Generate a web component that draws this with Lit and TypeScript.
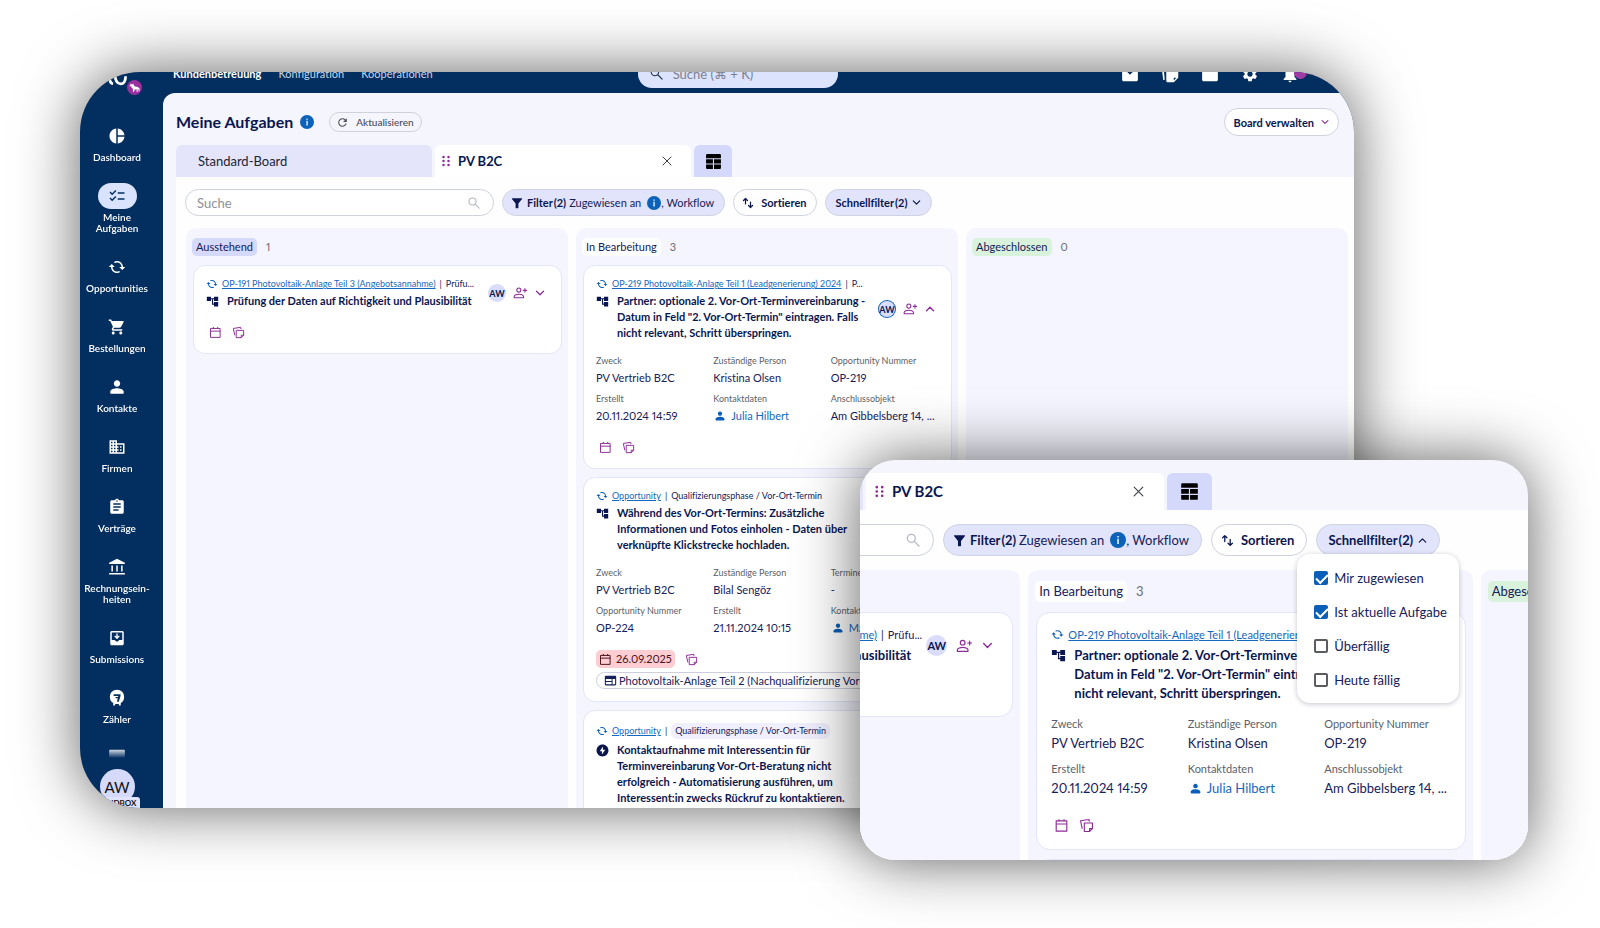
import { LitElement, html, css, svg, nothing } from "lit";
import { customElement, property } from "lit/decorators.js";
import { classMap } from "lit/directives/class-map.js";

/* ---------- icons ---------- */

const solid = (d: string) => svg`<path fill="currentColor" fill-rule="evenodd" d=${d} />`;
const line = (d: string, w = 1.8) =>
  svg`<path fill="none" stroke="currentColor" stroke-width=${w} stroke-linecap="round" stroke-linejoin="round" d=${d} />`;

const ICONS: Record<string, unknown> = {
  dashboard: solid("M11 2v20c-5.07-.5-9-4.79-9-10s3.93-9.5 9-10zm2.03 0v8.99H22c-.47-4.74-4.24-8.52-8.97-8.99zm0 11.01V22c4.74-.47 8.5-4.25 8.97-8.99h-8.97z"),
  tasks: solid("M22 7h-9v2h9V7zm0 8h-9v2h9v-2zM5.54 11 2 7.46l1.41-1.41 2.12 2.12 4.24-4.24 1.41 1.41L5.54 11zm0 8L2 15.46l1.41-1.41 2.12 2.12 4.24-4.24 1.41 1.41L5.54 19z"),
  cycle: svg`<g transform="matrix(-1 0 0 1 24 0)">${solid("m19 8-4 4h3c0 3.31-2.69 6-6 6-1.01 0-1.97-.25-2.8-.7l-1.46 1.46C8.97 19.54 10.43 20 12 20c4.42 0 8-3.58 8-8h3l-4-4zM6 12c0-3.31 2.69-6 6-6 1.01 0 1.97.25 2.8.7l1.46-1.46C15.03 4.46 13.57 4 12 4c-4.42 0-8 3.58-8 8H1l4 4 4-4H6z")}</g>`,
  cart: solid("M7 18c-1.1 0-1.99.9-1.99 2S5.9 22 7 22s2-.9 2-2-.9-2-2-2zM1 2v2h2l3.6 7.59-1.35 2.45c-.16.28-.25.61-.25.96 0 1.1.9 2 2 2h12v-2H7.42c-.14 0-.25-.11-.25-.25l.03-.12.9-1.63h7.45c.75 0 1.41-.41 1.75-1.03l3.58-6.49c.08-.14.12-.31.12-.48 0-.55-.45-1-1-1H5.21l-.94-2H1zm16 16c-1.1 0-1.99.9-1.99 2s.89 2 1.99 2 2-.9 2-2-.9-2-2-2z"),
  person: solid("M12 11.5c2.35 0 4.25-1.9 4.25-4.25S14.35 3 12 3 7.75 4.9 7.75 7.25 9.65 11.5 12 11.5zM12 13.5c-3.2 0-9 1.4-9 4.8v1.2c0 .8.6 1.5 1.5 1.5h15c.9 0 1.5-.7 1.5-1.5v-1.2c0-3.4-5.8-4.8-9-4.8z"),
  company: solid("M12 7V3H2v18h20V7H12zM6 19H4v-2h2v2zm0-4H4v-2h2v2zm0-4H4V9h2v2zm0-4H4V5h2v2zm4 12H8v-2h2v2zm0-4H8v-2h2v2zm0-4H8V9h2v2zm0-4H8V5h2v2zm10 12h-8v-2h2v-2h-2v-2h2v-2h-2V9h8v10zm-2-8h-2v2h2v-2zm0 4h-2v2h2v-2z"),
  contract: solid("M19 3h-4.18C14.4 1.84 13.3 1 12 1c-1.3 0-2.4.84-2.82 2H5c-1.1 0-2 .9-2 2v14c0 1.1.9 2 2 2h14c1.1 0 2-.9 2-2V5c0-1.1-.9-2-2-2zm-7 0c.55 0 1 .45 1 1s-.45 1-1 1-1-.45-1-1 .45-1 1-1zm2 14H7v-2h7v2zm3-4H7v-2h10v2zm0-4H7V7h10v2z"),
  bank: solid("M12 1 1.5 6.2V8h21V6.2L12 1zM4.5 10h2v8h-2zM11 10h2v8h-2zM17.5 10h2v8h-2zM1.5 20h21v2h-21z"),
  inbox: solid("M5 2.500h14c1.100 0 2 .9 2 2v15c0 1.100-.9 2-2 2H5c-1.100 0-2-.9-2-2v-15c0-1.100.9-2 2-2zm0 2v10h4c.6 1.200 1.700 2 3 2s2.400-.8 3-2h4v-10H5zm6.100 1.500h1.800v4l1.600-1.500 1.200 1.200L12 13.500l-3.700-3.800 1.200-1.200 1.600 1.500z"),
  meter: solid("M12 1c5.500 0 9.500 4.200 9.500 9.500 0 3.700-1.700 6.500-4.500 8.200V22h-2.500v-2h-5v2H7v-3.300c-2.800-1.700-4.500-4.500-4.500-8.200C2.500 5.200 6.500 1 12 1zM7.500 7v2.200h6.200l-.3 1.300h-3.200v1.800h2.800L12 17h2.400l2.300-7.800V7z"),
  box: solid("M3.500 3h17c1.100 0 2 .9 2 2v14.500c0 1.100-.9 2-2 2h-17c-1.100 0-2-.9-2-2V5c0-1.100.9-2 2-2z"),
  chat: solid("M3 1h18c.8 0 1.500.7 1.500 1.500V16H1.500V2.500C1.500 1.700 2.200 1 3 1z"),
  tree: solid("M22.500 11.200V3h-7.700v3H9.200V3H1.500v8.200h7.700V8h1.900v9.900h3.700V21h7.700v-8.200h-7.700v3.100h-1.700V8h1.700v3.200z"),
  funnel: solid("M2.500 2.500h19c.7 0 1 .8.600 1.300L14.800 13v8.700c0 .5-.4.800-.8.800h-4c-.4 0-.8-.3-.8-.8V13L1.900 3.800c-.4-.5-.1-1.300.6-1.300z"),
  refresh: solid("M17.650 6.350C16.200 4.900 14.210 4 12 4c-4.420 0-7.990 3.580-7.990 8s3.570 8 7.990 8c3.730 0 6.840-2.550 7.730-6h-2.080c-.82 2.330-3.040 4-5.650 4-3.310 0-6-2.690-6-6s2.690-6 6-6c1.660 0 3.140.69 4.220 1.780L13 11h7V4l-2.350 2.350z"),
  search: line("M15.500 9.500a6 6 0 1 1-12 0 6 6 0 0 1 12 0zM14 14l7 7"),
  close: line("M4 4l16 16M20 4 4 20", 2),
  down: line("M5 8.500l7 7 7-7", 2.600),
  up: line("M5 15.500l7-7 7 7", 2.600),
  sort: line("M7 14V3M3 7l4-4 4 4M17 10v11M13 17l4 4 4-4", 2.400),
  grid: solid("M3 1.500h18A1.500 1.500 0 0 1 22.500 3v4.300H1.500V3A1.500 1.500 0 0 1 3 1.500zM1.500 8.800h9.700v5.900H1.500zM12.700 8.800h9.800v5.900h-9.800zM1.500 16.300h9.700v6.200H3A1.500 1.500 0 0 1 1.500 21zM12.700 16.300h9.800V21a1.500 1.500 0 0 1-1.500 1.500h-8.300z"),
  drag: solid("M7 1.500a2.500 2.500 0 1 1 0 5 2.500 2.500 0 0 1 0-5zM17 1.500a2.500 2.500 0 1 1 0 5 2.500 2.500 0 0 1 0-5zM7 9.500a2.500 2.500 0 1 1 0 5 2.500 2.500 0 0 1 0-5zM17 9.500a2.500 2.500 0 1 1 0 5 2.500 2.500 0 0 1 0-5zM7 17.500a2.500 2.500 0 1 1 0 5 2.500 2.500 0 0 1 0-5zM17 17.500a2.500 2.500 0 1 1 0 5 2.500 2.500 0 0 1 0-5z"),
  info: svg`<circle cx="12" cy="12" r="12" fill="#0b62b8" /><path fill="#fff" d="M11 10h2.200v8H11zM11 6h2.200v2.300H11z" />`,
  assign: line("M13.500 7a3.500 3.500 0 1 1-7 0 3.500 3.500 0 0 1 7 0zM2 20v-2c0-2.500 5-4 8-4s8 1.500 8 4v2zM20.500 4.500v6M17.500 7.500h6"),
  calendar: line("M3.500 4.500h17V21h-17zM3.500 9.500h17M8 4.500V2.500M16 4.500V2.500"),
  notes: line("M8.500 8h13v9l-4.500 4.500H8.500zM21.500 17H17v4.500M5 16.500 2.500 4.500 16 2.500l.5 2.500"),
  bolt: solid("M12 1c6.100 0 11 4.900 11 11s-4.900 11-11 11S1 18.100 1 12 5.900 1 12 1zM12.800 4.500 7 13.300h4v6.200l6-8.800h-4.200z"),
  web: solid("M3.500 3h17c1.100 0 2 .9 2 2v14c0 1.100-.9 2-2 2h-17c-1.100 0-2-.9-2-2V5c0-1.100.9-2 2-2zm0 6v3.800H14V9H3.500zm0 5.600V19H14v-4.400H3.500zM15.800 9v10h4.700V9h-4.700z"),
  mail: solid("M3.500 3h17c1.100 0 2 .9 2 2v14.500c0 1.100-.9 2-2 2h-17c-1.100 0-2-.9-2-2V5c0-1.100.9-2 2-2zM8 9l4 4 4-4z"),
  notesSolid: solid("M7 5h14c1.100 0 2 .9 2 2v10l-6 6H9c-1.100 0-2-.9-2-2V7c0-1.100.9-2 2-2zm10 12v3.500l3.500-3.500zM1 5l2 15 2-.5L3.500 3z"),
  gear: solid("M19.140 12.940c.04-.3.060-.61.060-.94 0-.32-.02-.64-.07-.94l2.030-1.580c.18-.14.230-.41.120-.61l-1.920-3.320c-.12-.22-.37-.29-.59-.22l-2.390.96c-.5-.38-1.030-.7-1.620-.94l-.36-2.540c-.04-.24-.24-.41-.48-.41h-3.840c-.24 0-.43.17-.47.41l-.36 2.540c-.59.24-1.130.57-1.620.94l-2.390-.96c-.22-.08-.47 0-.59.22L2.740 8.870c-.12.21-.08.470.12.610l2.030 1.580c-.05.3-.09.630-.09.940s.02.640.07.940l-2.030 1.580c-.18.140-.23.410-.12.610l1.920 3.320c.12.220.37.290.59.220l2.390-.96c.5.380 1.030.7 1.620.940l.36 2.540c.05.240.24.410.48.410h3.840c.24 0 .44-.17.470-.41l.36-2.540c.59-.24 1.130-.56 1.620-.94l2.390.96c.22.080.47 0 .59-.22l1.920-3.320c.12-.22.070-.47-.12-.61l-2.010-1.580zM12 15.600c-1.980 0-3.600-1.620-3.600-3.600s1.620-3.600 3.600-3.600 3.600 1.620 3.600 3.600-1.620 3.600-3.600 3.600z"),
  bell: solid("M12 23c1.100 0 2-.9 2-2h-4c0 1.100.89 2 2 2zm6-7v-5c0-3.070-1.640-5.640-4.500-6.320V4c0-.83-.67-1.500-1.500-1.500s-1.500.67-1.500 1.500v.68C7.630 5.360 6 7.920 6 11v5l-2.500 2.500V20h17v-1.500L18 16z"),
  logo: svg`<path fill="none" stroke="#fff" stroke-width="4" d="M5 8c0 5 1 8 5 9M13 3c0 9 3 14 8 14 4 0 7-4 7-11" />`,
  unicorn: svg`<circle cx="12" cy="12" r="12" fill="#9a2fa0" /><path fill="#fff" d="M5 5l3 2 2-1 2 4 5 1 3 2v5h-1.500v-3l-1.500-.5V19h-1.500v-4h-3L11 19H9.500v-5L7 12V9.500l-2.500 1L4 9l2-2z" />`,
};

const icon = (name: string, cls = "") =>
  html`<svg class="icon ${cls}" viewBox=${name === "logo" ? "0 0 30 20" : "0 0 24 24"} aria-hidden="true">${ICONS[name]}</svg>`;

const shared = css`
  * { box-sizing: border-box; }
  .icon { display: block; flex: none; width: 16px; height: 16px; }
  button { font: inherit; color: inherit; background: none; border: 0; padding: 0; margin: 0; cursor: pointer; }
  a { color: inherit; }
  ul, dl, dd, h1, h2, h3, p { margin: 0; padding: 0; }
  ul { list-style: none; }
`;

/* ---------- board data ---------- */

interface Field { label: string; value: string; contact?: boolean; }
interface Task {
  link: string; phase: string; phaseChip?: boolean; icon: string; title: string[];
  open?: boolean; watched?: boolean; due?: string; tag?: string; fields?: Field[];
}
interface Column { name: string; tone: string; tasks: Task[]; count: number; }

const COLUMNS: Column[] = [
  {
    name: "Ausstehend", tone: "blue", count: 1,
    tasks: [{
      link: "OP-191 Photovoltaik-Anlage Teil 3 (Angebotsannahme)", phase: "Prüfu...", icon: "tree",
      title: ["Prüfung der Daten auf Richtigkeit und Plausibilität"],
    }],
  },
  {
    name: "In Bearbeitung", tone: "white", count: 3,
    tasks: [
      {
        link: "OP-219 Photovoltaik-Anlage Teil 1 (Leadgenerierung) 2024", phase: "P...", icon: "tree", open: true, watched: true,
        title: ["Partner: optionale 2. Vor-Ort-Terminvereinbarung -", "Datum in Feld \"2. Vor-Ort-Termin\" eintragen. Falls", "nicht relevant, Schritt überspringen."],
        fields: [
          { label: "Zweck", value: "PV Vertrieb B2C" },
          { label: "Zuständige Person", value: "Kristina Olsen" },
          { label: "Opportunity Nummer", value: "OP-219" },
          { label: "Erstellt", value: "20.11.2024 14:59" },
          { label: "Kontaktdaten", value: "Julia Hilbert", contact: true },
          { label: "Anschlussobjekt", value: "Am Gibbelsberg 14, ..." },
        ],
      },
      {
        link: "Opportunity", phase: "Qualifizierungsphase / Vor-Ort-Termin", icon: "tree", open: true,
        title: ["Während des Vor-Ort-Termins: Zusätzliche", "Informationen und Fotos einholen - Daten über", "verknüpfte Klickstrecke hochladen."],
        fields: [
          { label: "Zweck", value: "PV Vertrieb B2C" },
          { label: "Zuständige Person", value: "Bilal Sengöz" },
          { label: "Termine", value: "-" },
          { label: "Opportunity Nummer", value: "OP-224" },
          { label: "Erstellt", value: "21.11.2024 10:15" },
          { label: "Kontaktdaten", value: "Maria", contact: true },
        ],
        due: "26.09.2025", tag: "Photovoltaik-Anlage Teil 2 (Nachqualifizierung Vor-Ort)",
      },
      {
        link: "Opportunity", phase: "Qualifizierungsphase / Vor-Ort-Termin", phaseChip: true, icon: "bolt", open: true,
        title: ["Kontaktaufnahme mit Interessent:in für", "Terminvereinbarung Vor-Ort-Beratung nicht", "erfolgreich - Automatisierung ausführen, um", "Interessent:in zwecks Rückruf zu kontaktieren."],
      },
    ],
  },
  { name: "Abgeschlossen", tone: "green", count: 0, tasks: [] },
];

const QUICK_FILTERS = [
  { id: "mine", label: "Mir zugewiesen", checked: true },
  { id: "current", label: "Ist aktuelle Aufgabe", checked: true },
  { id: "overdue", label: "Überfällig", checked: false },
  { id: "today", label: "Heute fällig", checked: false },
];

/* ---------- board ---------- */

@customElement("task-board")
export class TaskBoard extends LitElement {
  @property({ type: Boolean, reflect: true }) large = false;
  @property({ type: Boolean }) menuOpen = false;

  static styles = [shared, css`
    :host {
      --fs-tab: 13px; --fs-search: 13px; --fs-body: 11px; --fs-small: 9px; --fs-chip: 11px;
      --tab-w: 256px; --tab-h: 32px; --tab-l: 5px; --tab-r: 18px; --add-w: 38px;
      --ctl-h: 27px; --search-w: 309px; --ctl-l: 8px; --ctl-r: 10px; --gap: 8px;
      --bar-top: 12px; --bar-bottom: 12px; --edge-l: 10px; --edge-r: 6px;
      --col-top: 10px; --col-l: 7px; --col-r: 6px; --chip-h: 18px; --col-gap: 9px; --card-gap: 8px;
      --card-r: 12px; --pad-t: 11px; --pad-l: 12px; --pad-r: 3px; --pad-b: 12px; --act-r: 12px; --act-gap: 7px;
      --crumb-h: 14px; --crumb-gap: 2px; --line: 16px; --sec: 13px; --row-gap: 6px; --foot: 14px; --foot-h: 18px;
      --i-xs: 11px; --i-s: 12px; --i-m: 13px; --i-l: 14px; --i-grid: 17px; --avatar: 18px;
      display: flex; flex-direction: column; min-height: 0; color: #16205a;
      font-size: var(--fs-body); line-height: var(--line);
    }
    :host([large]) {
      --fs-tab: 15px; --fs-search: 15px; --fs-body: 13px; --fs-small: 11px; --fs-chip: 13px;
      --tab-w: 298px; --tab-h: 37px; --tab-l: 7px; --tab-r: 19px; --add-w: 45px;
      --ctl-h: 32px; --search-w: 359px; --ctl-l: 9px; --ctl-r: 12px; --gap: 9px;
      --bar-top: 14px; --bar-bottom: 14px; --edge-l: 11px; --edge-r: 7px;
      --col-top: 11px; --col-l: 8px; --col-r: 7px; --chip-h: 21px; --col-gap: 10px; --card-gap: 9px;
      --card-r: 14px; --pad-t: 13px; --pad-l: 14px; --pad-r: 4px; --pad-b: 13px; --act-r: 14px; --act-gap: 9px;
      --crumb-h: 16px; --crumb-gap: 4px; --line: 19px; --sec: 13px; --row-gap: 8px; --foot: 17px; --foot-h: 21px;
      --i-xs: 13px; --i-s: 13px; --i-m: 15px; --i-l: 16px; --i-grid: 19px; --avatar: 21px;
    }
    .tabs { display: flex; flex: none; height: var(--tab-h); gap: 3px; font-size: var(--fs-tab); }
    .tab { display: flex; align-items: center; width: var(--tab-w); border-radius: 6px 6px 0 0; background: #e4e5fb; color: #1d2433; padding: 0 22px; }
    .tab.active { background: #fff; color: #0a1650; font-weight: 700; padding: 0 var(--tab-r) 0 var(--tab-l); gap: 6px; }
    .tab.active button:first-child { color: #8c2d96; }
    .tab .name { flex: 1; text-align: left; }
    .tab .close { color: #3a3d45; }
    .tab .icon { width: var(--i-s); height: var(--i-s); }
    .add { display: grid; place-items: center; width: var(--add-w); border-radius: 6px 6px 0 0; background: #d4d8fa; color: #000; }
    .add .icon { width: var(--i-grid); height: var(--i-grid); }

    .panel { flex: 1; min-height: 0; display: flex; flex-direction: column; background: #fefefe; padding: var(--bar-top) var(--edge-r) 0 var(--edge-l); }
    .bar { display: flex; flex: none; gap: var(--gap); margin-bottom: var(--bar-bottom); height: var(--ctl-h); }
    .search { display: flex; align-items: center; width: var(--search-w); margin-left: -1px; padding: 0 12px 0 11px; border: 1px solid #ced2da; border-radius: 16px; background: #fff; color: #b2b6c0; }
    .search input { flex: 1; min-width: 0; border: 0; outline: 0; padding: 0; background: none; font: inherit; font-size: var(--fs-search); color: #16205a; }
    .search input::placeholder { color: #8d9099; opacity: 1; }
    .search .icon { width: var(--i-l); height: var(--i-l); }
    .pill { display: flex; align-items: center; height: 100%; padding: 0 var(--ctl-r) 0 var(--ctl-l); border: 1px solid #cfd2e0; border-radius: 16px; background: #fff; white-space: nowrap; }
    .pill.on { background: #e2e4fb; }
    .pill b { font-weight: 700; color: #0a1650; }
    .pill b span { margin-left: 1px; }
    .pill .icon { width: var(--i-s); height: var(--i-s); margin-right: 4px; color: #0a1650; }
    .pill .info { width: var(--i-l); height: var(--i-l); margin: 0 0 0 6px; }
    .pill .gap { margin-right: 7px; }
    .pill .sub { margin-left: 3px; }
    .drop { position: relative; }
    .drop .pill { padding: 0 9px; }
    .drop .pill .icon { width: 11px; height: 11px; margin: 0 0 0 4px; }
    :host([large]) .drop .pill { padding: 0 11px; }
    .menu { position: absolute; z-index: 2; top: calc(100% - 2px); left: 50%; width: 162px; margin-left: -81px; padding: 7px 0 6px; border-radius: 13px; background: #fff; box-shadow: 0 1px 5px rgba(20, 24, 60, .25); }
    .menu label { display: flex; align-items: center; gap: 6px; height: 34px; padding-left: 17px; white-space: nowrap; cursor: pointer; }
    .menu input { appearance: none; display: grid; place-items: center; width: 14px; height: 14px; margin: 0; border: 2px solid #5a5c62; border-radius: 2px; background: #fff; }
    .menu input:checked { background: #0b5fb8; border-color: #0b5fb8; }
    .menu input:checked::before { content: ""; width: 10px; height: 5px; border: solid #fff; border-width: 0 0 2px 2px; transform: translateY(-1px) rotate(-45deg); }

    .columns { flex: 1; min-height: 0; display: grid; grid-template-columns: repeat(3, minmax(0, 1fr)); gap: 8px; overflow: hidden; }
    .column { padding: var(--col-top) var(--col-r) 0 var(--col-l); border-radius: 10px 10px 0 0; background: #f4f5fe; }
    .head { display: flex; align-items: center; gap: 9px; height: var(--chip-h); margin: 0 0 var(--col-gap) -1px; font-size: var(--fs-chip); }
    .head h2 { font: inherit; line-height: var(--chip-h); padding: 0 4px; border-radius: 5px; }
    .head .count { color: #6b6e78; }
    .blue { background: #d5d9fa; }
    .white { background: #fff; }
    .green { background: #d9f2dc; }
    .cards { display: flex; flex-direction: column; gap: var(--card-gap); }

    .card { padding: var(--pad-t) var(--pad-r) var(--pad-b) var(--pad-l); border: 1px solid #e2e5fc; border-radius: var(--card-r); background: #fff; }
    .top { display: flex; align-items: center; padding-right: var(--act-r); }
    .lead { flex: 1; min-width: 0; }
    .crumb { display: flex; align-items: center; gap: 4px; height: var(--crumb-h); margin-bottom: var(--crumb-gap); font-size: var(--fs-small); white-space: nowrap; }
    .crumb.tall { height: var(--foot-h); }
    .crumb a { color: #1468bd; }
    .crumb .icon { width: var(--i-s); height: var(--i-s); color: #0b5fb8; }
    .crumb .chip { padding: 0 4px; border-radius: 6px; background: #efeffd; line-height: var(--line); }
    .title { display: flex; gap: 8px; font-size: var(--fs-body); font-weight: 700; line-height: var(--line); color: #0a1650; white-space: nowrap; }
    .title .icon { width: var(--i-m); height: var(--i-m); margin-top: 2px; }
    .actions { display: flex; align-items: center; gap: var(--act-gap); color: #8c2d96; }
    .avatar { display: grid; place-items: center; width: var(--avatar); height: var(--avatar); border-radius: 50%; background: #d9ddfb; color: #0a1650; font-size: var(--fs-small); font-weight: 700; line-height: 1; }
    .avatar.watched { box-shadow: inset 0 0 0 1px #1468bd; }
    .actions .icon { width: var(--i-l); height: var(--i-l); }
    .actions .chev { width: var(--i-s); height: var(--i-s); }
    .fields { display: grid; grid-template-columns: repeat(3, minmax(0, 1fr)); row-gap: var(--row-gap); margin-top: var(--sec); white-space: nowrap; }
    .fields dt { font-size: var(--fs-small); line-height: var(--crumb-h); color: #5c5f6a; margin-bottom: 2px; }
    .fields dd a { display: flex; align-items: center; gap: 5px; padding-left: 1px; color: #1468bd; text-decoration: none; }
    .fields dd .icon { width: var(--i-s); height: var(--i-s); color: #0b5fb8; }
    .foot { display: flex; align-items: center; gap: 10px; height: var(--foot-h); margin-top: var(--foot); color: #8c2d96; }
    .foot .icon { width: var(--i-m); height: var(--i-m); }
    .foot .first { padding-left: 3px; }
    .due { display: flex; align-items: center; gap: 4px; height: 100%; padding: 0 3px; border-radius: 5px; background: #fccdd1; color: #4c1020; font-size: var(--fs-chip); }
    .tag { display: flex; align-items: center; gap: 2px; width: fit-content; max-width: 100%; height: 17px; margin-top: 4px; padding: 0 7px; border: 1px solid #cdd0dc; border-radius: 9px; white-space: nowrap; overflow: hidden; }
    .tag .icon { width: var(--i-m); height: var(--i-m); }
  `];

  private card(t: Task) {
    return html`<article class="card">
      <div class="top">
        <div class="lead">
          <p class=${classMap({ crumb: true, tall: !!t.phaseChip })}>
            ${icon("cycle")}<a href="#">${t.link}</a><span>|</span><span class=${t.phaseChip ? "chip" : ""}>${t.phase}</span>
          </p>
          <h3 class="title">${icon(t.icon)}<span>${t.title.map((l, i) => html`${i ? html`<br>` : nothing}${l}`)}</span></h3>
        </div>
        <div class="actions">
          <span class=${classMap({ avatar: true, watched: !!t.watched })}>AW</span>
          <button aria-label="Person zuweisen">${icon("assign")}</button>
          <button aria-label="Details umschalten">${icon(t.open ? "up" : "down", "chev")}</button>
        </div>
      </div>
      ${t.fields ? html`<dl class="fields">${t.fields.map((f) => html`<div>
        <dt>${f.label}</dt>
        <dd>${f.contact ? html`<a href="#">${icon("person")}${f.value}</a>` : f.value}</dd>
      </div>`)}</dl>` : nothing}
      <div class="foot">
        ${t.due
          ? html`<button class="due">${icon("calendar")}${t.due}</button>`
          : html`<button class="first" aria-label="Fälligkeit setzen">${icon("calendar")}</button>`}
        <button aria-label="Notizen">${icon("notes")}</button>
      </div>
      ${t.tag ? html`<p class="tag">${icon("web")}${t.tag}</p>` : nothing}
    </article>`;
  }

  render() {
    return html`
      <div class="tabs">
        <button class="tab"><span class="name">Standard-Board</span></button>
        <div class="tab active">
          <button aria-label="Tab verschieben">${icon("drag")}</button>
          <span class="name">PV B2C</span>
          <button class="close" aria-label="Tab schließen">${icon("close")}</button>
        </div>
        <button class="add" aria-label="Board hinzufügen">${icon("grid")}</button>
      </div>
      <div class="panel">
        <div class="bar">
          <label class="search"><input type="search" placeholder="Suche" aria-label="Suche">${icon("search")}</label>
          <button class="pill on">${icon("funnel")}<b>Filter<span>(2)</span></b><span class="sub">Zugewiesen an</span>${icon("info", "info")}<span>, Workflow</span></button>
          <button class="pill">${icon("sort", "gap")}<b>Sortieren</b></button>
          <div class="drop">
            <button class="pill on" aria-expanded=${this.menuOpen}><b>Schnellfilter<span>(2)</span></b>${icon(this.menuOpen ? "up" : "down")}</button>
            ${this.menuOpen ? html`<div class="menu">${QUICK_FILTERS.map((q) => html`
              <label for=${q.id}><input type="checkbox" id=${q.id} .checked=${q.checked}>${q.label}</label>`)}</div>` : nothing}
          </div>
        </div>
        <div class="columns">
          ${COLUMNS.map((c) => html`<section class="column">
            <header class="head"><h2 class=${c.tone}>${c.name}</h2><span class="count">${c.count}</span></header>
            <div class="cards">${c.tasks.map((t) => this.card(t))}</div>
          </section>`)}
        </div>
      </div>`;
  }
}

/* ---------- page ---------- */

const NAV = [
  { icon: "dashboard", lines: ["Dashboard"] },
  { icon: "tasks", lines: ["Meine", "Aufgaben"], active: true },
  { icon: "cycle", lines: ["Opportunities"] },
  { icon: "cart", lines: ["Bestellungen"] },
  { icon: "person", lines: ["Kontakte"] },
  { icon: "company", lines: ["Firmen"] },
  { icon: "contract", lines: ["Verträge"] },
  { icon: "bank", lines: ["Rechnungsein-", "heiten"] },
  { icon: "inbox", lines: ["Submissions"] },
  { icon: "meter", lines: ["Zähler"] },
  { icon: "chat", lines: [] as string[] },
];

@customElement("app-root")
export class AppRoot extends LitElement {
  static styles = [shared, css`
    :host { display: block; font-family: Lato, "Open Sans", sans-serif; font-variant-ligatures: none; font-variant-numeric: proportional-nums; background: #fff; }
    .stage { position: relative; display: flex; height: 100vh; padding: 72px 246px 120px 80px; overflow: hidden; }
    .window { flex: 1; min-width: 0; display: flex; overflow: hidden; border-radius: 60px; background: #032f60; box-shadow: 0 0 62px rgba(0, 0, 0, .62); }
    .app { flex: 1; min-width: 0; display: grid; grid-template-columns: 83px minmax(0, 1fr); margin-top: -18px; }

    .side { display: flex; flex-direction: column; align-items: center; min-height: 0; padding-right: 9px; color: #fff; }
    .brand { position: relative; flex: none; width: 30px; height: 69px; }
    .brand .icon { width: 21px; height: 14px; margin-top: 18px; margin-left: 4px; }
    .brand .badge { position: absolute; left: 25px; top: 26px; width: 15px; height: 15px; margin: 0; }
    nav.rail { flex: 1; min-height: 0; overflow: hidden; mask-image: linear-gradient(#000 calc(100% - 10px), transparent); }
    .rail a { display: flex; flex-direction: column; align-items: center; margin-bottom: 20px; color: #fff; text-decoration: none; text-align: center; font-size: 10px; font-weight: 600; line-height: 11px; }
    .rail .blob { display: grid; place-items: center; width: 39px; height: 26px; margin-bottom: 3px; border-radius: 13px; }
    .rail .icon { width: 18px; height: 18px; }
    .rail .active .blob { background: #d9e3fd; color: #032f60; }
    .rail span { display: block; }
    .user { position: relative; flex: none; height: 50px; padding-top: 11px; color: #111; }
    .user .face { display: grid; place-items: center; width: 35px; height: 35px; border-radius: 50%; background: #d5d9fa; font-size: 15px; }
    .user .env { position: absolute; left: 50%; top: 39px; width: 46px; margin-left: -23px; border-radius: 3px; background: #e1e4fd; text-align: center; font-size: 8px; font-weight: 700; line-height: 13px; }

    .main { display: flex; flex-direction: column; min-width: 0; min-height: 0; }
    .topbar { flex: none; display: grid; grid-template-columns: 9fr 200px 10fr; align-items: center; height: 39px; padding-left: 10px; color: #fff; font-size: 11px; }
    .links { display: flex; gap: 17px; }
    .links a { color: #c6d5e8; text-decoration: none; }
    .links a.here { color: #fff; font-weight: 700; }
    .global { display: flex; align-items: center; gap: 9px; height: 28px; padding: 0 11px; border-radius: 14px; background: #dbe3fd; color: #25304d; }
    .global input { flex: 1; min-width: 0; border: 0; outline: 0; padding: 0; background: none; font: inherit; font-size: 13px; }
    .global input::placeholder { color: #7b8090; opacity: 1; }
    .global .icon { width: 15px; height: 15px; }
    .tools { display: flex; justify-content: flex-end; gap: 22px; padding-right: 55px; }
    .tools .icon { width: 18px; height: 18px; }
    .tools button { position: relative; }
    .tools .dot { position: absolute; left: 13px; top: 1px; width: 13px; height: 13px; border-radius: 50%; background: #a03aa6; }

    .content { flex: 1; min-height: 0; display: flex; flex-direction: column; padding: 15px 0 0 13px; border-radius: 12px 0 0 0; background: #f5f5fe; }
    .heading { display: flex; flex: none; align-items: center; height: 28px; margin: 0 15px 9px 0; color: #0a1650; }
    .heading h1 { font-size: 16px; font-weight: 700; line-height: 24px; }
    .heading .info { width: 14px; height: 14px; margin: 0 15px 0 7px; }
    .reload { display: flex; align-items: center; gap: 7px; height: 20px; padding: 0 7px 0 6px; border: 1px solid #cfd1dc; border-radius: 10px; color: #4a4c58; font-size: 10px; font-weight: 500; }
    .reload .icon { width: 13px; height: 13px; }
    .manage { display: flex; align-items: center; gap: 6px; height: 28px; margin-left: auto; padding: 0 8px 0 9px; border: 1px solid #cfd1e0; border-radius: 14px; background: #fff; font-size: 11px; font-weight: 700; }
    .manage .icon { width: 10px; height: 10px; color: #8c2d96; }
    task-board { flex: 1; }

    .inset { position: absolute; right: 72px; bottom: 68px; width: 668px; height: 400px; display: flex; overflow: hidden; padding-top: 13px; border-radius: 35px; background: #f5f5fe; box-shadow: 0 0 62px rgba(0, 0, 0, .62); }
    .inset task-board { flex: none; width: 1367px; margin-left: -295px; }
  `];

  render() {
    return html`<div class="stage">
      <div class="window">
        <div class="app">
          <aside class="side">
            <div class="brand">${icon("logo")}${icon("unicorn", "badge")}</div>
            <nav class="rail">
              ${NAV.map((n) => html`<a href="#" class=${n.active ? "active" : ""} aria-label=${n.lines.join("") || "Weitere"}>
                <div class="blob">${icon(n.icon)}</div>${n.lines.map((l) => html`<span>${l}</span>`)}
              </a>`)}
            </nav>
            <div class="user"><div class="face">AW</div><div class="env">SANDBOX</div></div>
          </aside>
          <div class="main">
            <header class="topbar">
              <nav class="links"><a class="here" href="#">Kundenbetreuung</a><a href="#">Konfiguration</a><a href="#">Kooperationen</a></nav>
              <label class="global">${icon("search")}<input type="search" placeholder="Suche (⌘ + K)" aria-label="Globale Suche"></label>
              <div class="tools">
                <button aria-label="Nachrichten">${icon("mail")}</button>
                <button aria-label="Notizen">${icon("notesSolid")}</button>
                <button aria-label="Kalender">${icon("box")}</button>
                <button aria-label="Einstellungen">${icon("gear")}</button>
                <button aria-label="Benachrichtigungen">${icon("bell")}<span class="dot"></span></button>
              </div>
            </header>
            <main class="content">
              <div class="heading">
                <h1>Meine Aufgaben</h1>${icon("info", "info")}
                <button class="reload">${icon("refresh")}Aktualisieren</button>
                <button class="manage">Board verwalten${icon("down")}</button>
              </div>
              <task-board></task-board>
            </main>
          </div>
        </div>
      </div>
      <div class="inset"><task-board large .menuOpen=${true}></task-board></div>
    </div>`;
  }
}
